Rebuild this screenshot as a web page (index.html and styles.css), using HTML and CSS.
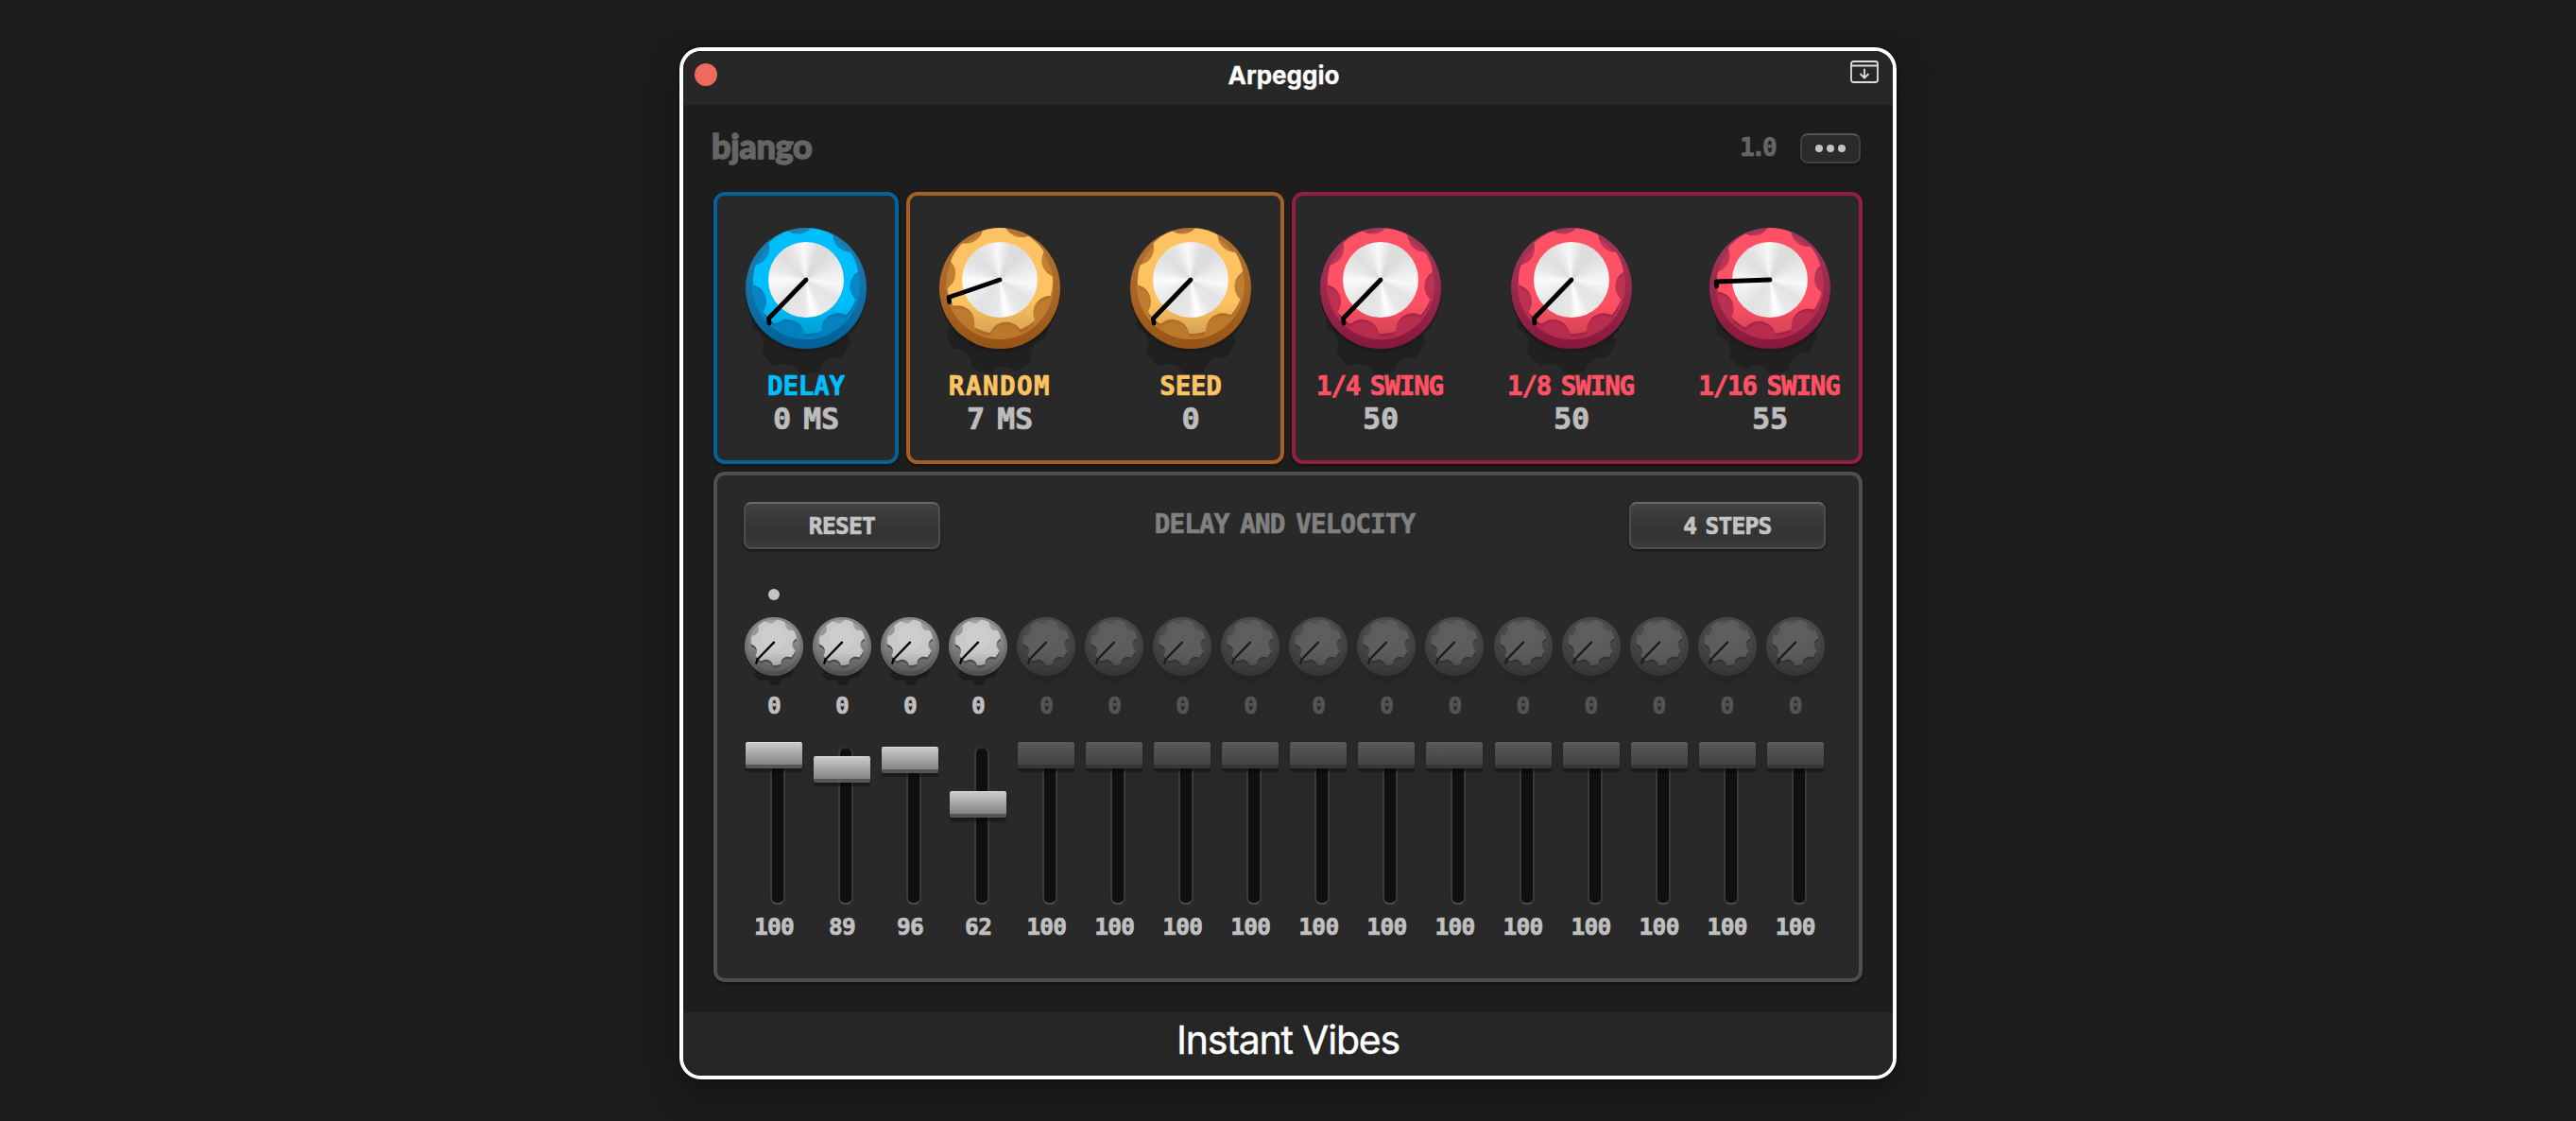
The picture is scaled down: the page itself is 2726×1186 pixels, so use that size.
FILE: index.html
```
<!DOCTYPE html>
<html lang="en">
  <head>
    <meta charset="utf-8">
    <title>Arpeggio</title>
    <meta name="viewport" content="width=device-width, initial-scale=1.0">
    <link rel="stylesheet" href="styles.css">
  </head>
  <body>
    <div class="window">
      <div class="titlebar">
        <span class="close"></span>
        <h1 class="title">Arpeggio</h1>
        <svg class="dock" width="30" height="24" viewBox="0 0 30 24">
          <rect x="1" y="1" width="28" height="22" rx="2.5"/>
          <path d="M1 5.5H29M15 9.5V18M11 14.5L15 18.5L19 14.5"/>
        </svg>
      </div>

      <div class="plugin">
        <div class="topbar">
          <div class="brand">bjango</div>
          <div class="version lcd">1.0</div>
          <button class="more"><i></i><i></i><i></i></button>
        </div>

        <div class="groups">
          <div class="group blue">
            <div class="dial">
              <div class="knob" data-angle="134"></div>
              <div class="label lcd">DELAY</div>
              <div class="value lcd">0 MS</div>
            </div>
          </div>
          <div class="group orange">
            <div class="dial">
              <div class="knob" data-angle="161"></div>
              <div class="label lcd wide">RANDOM</div>
              <div class="value lcd">7 MS</div>
            </div>
            <div class="dial">
              <div class="knob" data-angle="134"></div>
              <div class="label lcd">SEED</div>
              <div class="value lcd">0</div>
            </div>
          </div>
          <div class="group red">
            <div class="dial">
              <div class="knob" data-angle="134"></div>
              <div class="label lcd tight">1/4 SWING</div>
              <div class="value lcd">50</div>
            </div>
            <div class="dial">
              <div class="knob" data-angle="134"></div>
              <div class="label lcd tight">1/8 SWING</div>
              <div class="value lcd">50</div>
            </div>
            <div class="dial">
              <div class="knob" data-angle="178"></div>
              <div class="label lcd tight">1/16 SWING</div>
              <div class="value lcd">55</div>
            </div>
          </div>
        </div>

        <div class="sequencer">
          <div class="toolbar">
            <button class="btn lcd">RESET</button>
            <h2 class="heading lcd">DELAY AND VELOCITY</h2>
            <button class="btn lcd">4 STEPS</button>
          </div>
          <div class="steps"></div>
        </div>
      </div>

      <div class="caption">Instant Vibes</div>
    </div>
    <script src="script.js"></script>
  </body>
</html>
```
FILE: styles.css
```
*{box-sizing:border-box;margin:0;padding:0;}
body{height:100vh;overflow:hidden;background:#1c1c1c;padding:50px 0 0 719px;font-family:Inter,sans-serif;color:#fff;}
button{border:none;background:none;color:inherit;}

.lcd{font-family:"DejaVu Sans Mono",monospace;font-weight:700;white-space:nowrap;-webkit-text-stroke:.7px currentColor;}

.window{width:1288px;height:1092px;border:4px solid #fff;border-radius:23px;overflow:hidden;background:#1d1d1d;
  display:flex;flex-direction:column;box-shadow:0 0 3px #000,0 14px 34px rgba(0,0,0,.35);}

/* title bar */
.titlebar{height:57px;padding:0 15px 7px 12px;background:#272727;display:flex;align-items:center;justify-content:space-between;}
.close{width:24px;height:24px;border-radius:50%;background:#ed6a5e;}
.title{font-size:26px;font-weight:700;line-height:50px;letter-spacing:0;padding-top:2px;-webkit-text-stroke:.3px #fff;}
.dock{fill:none;stroke:#dedede;stroke-width:1.8;stroke-linecap:round;stroke-linejoin:round;margin-bottom:6px;}

/* plugin body */
.plugin{height:960px;padding:0 32px;}
.topbar{height:92px;display:flex;align-items:center;padding-right:2px;}
.brand{font-family:Lato,sans-serif;font-weight:900;font-size:36px;line-height:40px;
  color:#656565;letter-spacing:-.3px;margin:-6px auto 0 -2px;-webkit-text-stroke:1.4px #656565;}
.version{font-size:26px;color:#656565;letter-spacing:-3.7px;margin-right:28px;margin-top:-2px;}
.more{width:64px;height:32px;border:2px solid #404040;border-top-color:#545454;border-radius:8px;background:#2a2a2a;
  display:flex;align-items:center;justify-content:center;gap:4px;box-shadow:0 2px 2px #121212;}
.more i{width:8px;height:8px;border-radius:50%;background:#c4c4c4;}

/* knob groups */
.groups{display:grid;grid-template-columns:196px 400px 604px;gap:8px;}
.group{height:288px;padding-top:34px;border:4px solid var(--line);border-radius:12px;background:#292929;display:grid;
  box-shadow:0 2px 3px #121212;}
.blue{grid-template-columns:188px;--line:#00649b;--face:#00bdfc;--side:#0092d2;--dark:#0069a3;}
.orange{grid-template-columns:190px 214px;--line:#a65f23;--face:#fdc261;--side:#cd8a38;--dark:#a35b16;}
.red{grid-template-columns:180px 224px 196px;--line:#961f3f;--face:#ff5165;--side:#d03656;--dark:#931a40;}
.dial{text-align:center;}
.knob{width:128px;height:128px;margin:0 auto;}
.knob svg{display:block;width:100%;height:100%;overflow:visible;}
.label{position:relative;margin-top:24px;font-size:27.5px;line-height:30px;color:var(--face);letter-spacing:-.2px;}
.label.wide{letter-spacing:1.5px;}
.label.tight{margin-right:2px;letter-spacing:-1.1px;word-spacing:-5px;}
.value{font-size:32px;line-height:41px;color:#bdbdbd;word-spacing:-6px;letter-spacing:-.3px;}

/* knob parts */
.base{fill:var(--dark);}
.skirt{fill:var(--side);}
.edge{fill:var(--dark);}
.face{fill:var(--face);}
.cast{fill:#1d1d1d;}
.pointer{fill:none;stroke:#000;stroke-width:4.8;stroke-linecap:round;stroke-linejoin:round;}
.metal{width:80px;height:80px;border-radius:50%;background:conic-gradient(from -5deg,#f8f8f8 0,#dedede 24deg,#dcdcdc 45deg,
  #e8e8e8 70deg,#f8f8f8 102deg,#e4e4e4 128deg,#e8e8e8 155deg,#fff 174deg,#e8e8e8 188deg,#e2e2e2 220deg,#ebebeb 245deg,
  #fbfbfb 275deg,#e8e8e8 295deg,#dfdfdf 320deg,#e6e6e6 340deg,#f8f8f8 360deg);}

/* sequencer */
.sequencer{height:540px;margin-top:8px;padding:28px 32px 0 24px;border:4px solid #4f4f4f;border-radius:12px;background:#292929;
  box-shadow:0 2px 3px #121212;--face:#c9c9c9;--side:#7d7d7d;--dark:#4c4c4c;}
.toolbar{display:flex;justify-content:space-between;padding:0 3px 0 4px;}
.btn{width:208px;height:50px;font-size:24.5px;line-height:48px;color:#c4c4c4;letter-spacing:-.7px;word-spacing:-5px;
  border:2px solid #4d4d4d;border-top-color:#696969;border-radius:8px;
  background:linear-gradient(#424242,#343434 55%,#343434 70%,#3b3b3b);box-shadow:0 2px 3px #171717;}
.heading{font-size:27.5px;line-height:46px;color:#808080;letter-spacing:-.8px;word-spacing:-4px;}
.steps{display:grid;grid-template-columns:repeat(16,72.05px);}
.step{text-align:center;}
.led{width:12px;height:12px;margin:42px auto 18px;border-radius:50%;}
.led.lit{background:#c4c4c4;}
.step .knob{width:62px;height:62px;}
.amount{margin-top:20px;font-size:24.5px;line-height:24px;color:#c0c0c0;letter-spacing:-.6px;}
.fader{position:relative;height:172px;margin-top:26px;}
.track{position:absolute;left:32px;top:5px;width:16px;height:167px;border:2px solid #3a3a3a;border-top-color:#303030;
  border-bottom-color:#4d4d4d;border-radius:7px;background:#0f0f0f;}
.handle{position:absolute;left:6px;width:60px;height:28px;border-radius:2px;border-top:1px solid #dedede;border-bottom:4px solid #565656;
  background:linear-gradient(#cbcbcb,#848484);background-clip:padding-box;box-shadow:0 4px 2px rgba(0,0,0,.35);}
.level{margin-top:12px;font-size:24.5px;line-height:24px;color:#c0c0c0;letter-spacing:-.7px;}
.off .knob{opacity:.32;}
.off .amount{color:#555;}
.off .handle{border-top-color:#5e5e5e;border-bottom-color:#373737;background:linear-gradient(#595959,#434343);background-clip:padding-box;}

.caption{height:67px;background:#262626;text-align:center;font-size:41px;line-height:58px;letter-spacing:-1.2px;-webkit-text-stroke:.4px #fff;}
```
FILE: script.js
```
const levels = [100, 89, 96, 62, 100, 100, 100, 100, 100, 100, 100, 100, 100, 100, 100, 100];
const activesteps = 4;
const rad = Math.PI / 180;

// outline of a circle with seven round bites, turned so the pointer sits between two of them
function scallop(cx, cy, r, bite, dist, angle, slant){
  let d = "";
  for(let t = 0; t < 360; t += 1.5){
    let off = (((t - angle) % 51.4286) + 51.4286) % 51.4286 - 25.7143;
    let centre = t - off;
    let far = dist - slant * Math.sin(centre * rad);
    let side = bite * bite - Math.pow(far * Math.sin(off * rad), 2);
    let rho = r;
    if(side > 0){
      rho = Math.min(r, far * Math.cos(off * rad) - Math.sqrt(side));
    }
    d += (t ? "L" : "M") + (cx + rho * Math.cos(t * rad)).toFixed(2) + " " + (cy + rho * Math.sin(t * rad)).toFixed(2);
  }
  return d + "Z";
}

function pointer(angle, len, lean, drop){
  let x = 64 + len * Math.cos(angle * rad);
  let y = 55 + len * Math.sin(angle * rad);
  return `M64 55L${x} ${y}l${lean} ${drop}`;
}

function bigknob(angle){
  return `<svg viewBox="0 0 128 128">
    <path class="cast" opacity=".75" d="${scallop(61, 101, 54, 17, 63, angle, 0)}"/>
    <circle cx="64" cy="68" r="64" fill="#1a1a1a" opacity=".8"/>
    <circle class="base" cx="64" cy="64" r="64"/>
    <circle cx="64" cy="64" r="64" fill="url(#lift)"/>
    <circle class="skirt" cx="64" cy="61" r="57" opacity=".65"/>
    <g clip-path="url(#rim)">
      <path class="edge" opacity=".3" d="${scallop(64, 61, 55, 18, 63, angle, 3)}"/>
      <path class="edge" opacity=".35" d="${scallop(64, 58, 56, 18, 64, angle, 3)}"/>
      <path class="face" d="${scallop(64, 56, 56, 18, 65, angle, 3)}"/>
      <path fill="url(#shade)" d="${scallop(64, 56, 56, 18, 65, angle, 3)}"/>
    </g>
    <foreignObject x="24" y="15" width="80" height="80"><div class="metal"></div></foreignObject>
    <path class="pointer" d="${pointer(angle, 57, .6, 5)}"/>
  </svg>`;
}

function smallknob(angle){
  return `<svg viewBox="0 0 128 128">
    <path class="cast" d="${scallop(62, 98, 50, 14, 56, angle, 0)}"/>
    <circle cx="64" cy="68" r="64" fill="#1a1a1a" opacity=".8"/>
    <circle class="base" cx="64" cy="64" r="64"/>
    <circle cx="64" cy="64" r="64" fill="url(#rimlight)"/>
    <circle cx="64" cy="62" r="56" fill="url(#well)"/>
    <path class="edge" d="${scallop(64, 60, 50, 15, 55, angle, 0)}"/>
    <path class="face" d="${scallop(64, 55, 50, 15, 56, angle, 1)}"/>
    <path fill="url(#shade)" d="${scallop(64, 55, 50, 15, 56, angle, 1)}"/>
    <circle cx="64" cy="42" r="27" fill="#fff" opacity=".1"/>
    <path class="pointer" d="${pointer(angle, 52, -2.5, 8)}"/>
  </svg>`;
}

// gradients shared by every knob
document.body.insertAdjacentHTML("beforeend", `<svg width="0" height="0">
  <linearGradient id="lift" x1="0" y1="0" x2="0" y2="1">
    <stop offset="0" stop-color="#fff" stop-opacity=".14"/><stop offset=".5" stop-color="#fff" stop-opacity=".07"/>
    <stop offset="1" stop-color="#000" stop-opacity=".08"/>
  </linearGradient>
  <linearGradient id="shade" x1="0" y1="0" x2="0" y2="1">
    <stop offset=".7" stop-opacity="0"/><stop offset="1" stop-opacity=".16"/>
  </linearGradient>
  <linearGradient id="rimlight" x1="0" y1="0" x2="0" y2="1">
    <stop offset="0" stop-color="#8c8c8c"/><stop offset=".6" stop-color="#707070"/><stop offset="1" stop-color="#4c4c4c"/>
  </linearGradient>
  <linearGradient id="well" x1="0" y1="0" x2="0" y2="1">
    <stop offset="0" stop-color="#a8a8a8"/><stop offset=".5" stop-color="#828282"/><stop offset="1" stop-color="#5e5e5e"/>
  </linearGradient>
  <clipPath id="rim"><circle cx="64" cy="64" r="64"/></clipPath>
</svg>`);

document.querySelectorAll(".dial .knob").forEach((element) => {
  element.innerHTML = bigknob(Number(element.dataset.angle));
});

let steps = "";
levels.forEach((level, index) => {
  steps += `<div class="step ${index < activesteps ? "" : "off"}">
    <div class="led ${index == 0 ? "lit" : ""}"></div>
    <div class="knob">${smallknob(134)}</div>
    <div class="amount lcd">0</div>
    <div class="fader"><div class="track"></div><div class="handle" style="top:${Math.round((100 - level) * 1.37)}px"></div></div>
    <div class="level lcd">${level}</div>
  </div>`;
});
document.querySelector(".steps").innerHTML = steps;
```
